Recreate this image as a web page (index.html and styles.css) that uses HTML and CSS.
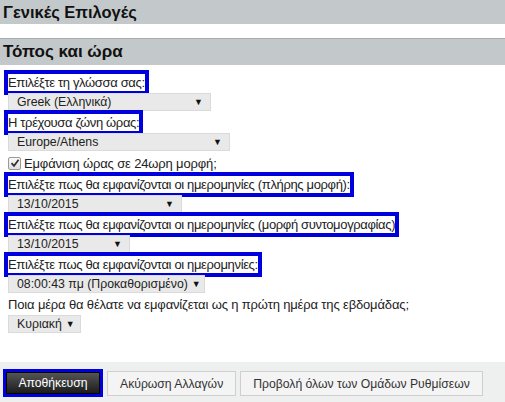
FILE: index.html
```html
<!DOCTYPE html>
<html lang="el">
<head>
<meta charset="utf-8">
<title>Γενικές Επιλογές</title>
<link rel="stylesheet" href="styles.css">
</head>
<body>
<div class="bar bar-main">Γενικές Επιλογές</div>
<div class="bar bar-sub">Τόπος και ώρα</div>
<div class="form">
  <div class="row"><span class="lbl hl">Επιλέξτε τη γλώσσα σας:</span></div>
  <div class="row"><div class="sel w1"><span>Greek (Ελληνικά)</span><span class="arr">▼</span></div></div>
  <div class="row"><span class="lbl hl">Η τρέχουσα ζώνη ώρας:</span></div>
  <div class="row"><div class="sel w2"><span>Europe/Athens</span><span class="arr">▼</span></div></div>
  <div class="row check-row">
    <span class="chk"><svg width="10" height="10" viewBox="0 0 10 10"><path d="M1.5 5.2 L4 7.8 L8.6 1.8" fill="none" stroke="#333" stroke-width="1.8"/></svg></span>
    <span class="txt">Εμφάνιση ώρας σε 24ωρη μορφή;</span>
  </div>
  <div class="row"><span class="lbl hl">Επιλέξτε πως θα εμφανίζονται οι ημερομηνίες (πλήρης μορφή):</span></div>
  <div class="row"><div class="sel w3"><span>13/10/2015</span><span class="arr">▼</span></div></div>
  <div class="row"><span class="lbl hl">Επιλέξτε πως θα εμφανίζονται οι ημερομηνίες (μορφή συντομογραφίας)</span></div>
  <div class="row"><div class="sel w4"><span>13/10/2015</span><span class="arr">▼</span></div></div>
  <div class="row"><span class="lbl hl">Επιλέξτε πως θα εμφανίζονται οι ημερομηνίες:</span></div>
  <div class="row"><div class="sel w5"><span>08:00:43 πμ (Προκαθορισμένο)</span><span class="arr">▼</span></div></div>
  <div class="row"><span class="txt">Ποια μέρα θα θέλατε να εμφανίζεται ως η πρώτη ημέρα της εβδομάδας;</span></div>
  <div class="row"><div class="sel w6"><span>Κυριακή</span><span class="arr">▼</span></div></div>
</div>
<div class="footer">
  <button class="btn btn-save">Αποθήκευση</button>
  <button class="btn">Ακύρωση Αλλαγών</button>
  <button class="btn">Προβολή όλων των Ομάδων Ρυθμίσεων</button>
</div>
</body>
</html>
```
FILE: styles.css
```css
html, body {
  margin: 0;
  padding: 0;
  background: #fff;
}
body {
  font-family: "Liberation Sans", Arial, sans-serif;
  color: #222;
  width: 505px;
  height: 402px;
  overflow: hidden;
  display: flex;
  flex-direction: column;
}
.bar {
  background: #c3c8cb;
  color: #111;
  font-weight: bold;
  font-size: 16.5px;
  padding-left: 3px;
  display: flex;
  align-items: center;
}
.bar-main {
  height: 24px;
}
.bar-sub {
  margin-top: 14px;
  height: 26px;
  border-top: 1px solid #a7acaf;
  font-size: 17px;
}
.form {
  padding: 8px 0 0 8px;
  display: flex;
  flex-direction: column;
  gap: 2px;
}
.row {
  display: flex;
  align-items: center;
  min-height: 18px;
}
.lbl {
  font-size: 13px;
  line-height: 17px;
  letter-spacing: -0.35px;
  color: #222;
  white-space: nowrap;
}
.txt {
  font-size: 13px;
  line-height: 17px;
  letter-spacing: -0.15px;
  color: #222;
  white-space: nowrap;
}
.hl {
  background: #fff;
  outline: 4px solid #0000dd;
}
.sel {
  height: 18px;
  box-sizing: border-box;
  background: #e9e9e9;
  border: 1px solid #dadada;
  display: flex;
  align-items: center;
  justify-content: space-between;
  padding: 0 7px 0 8px;
  font-size: 12.3px;
  color: #222;
  white-space: nowrap;
  flex-shrink: 0;
}
.arr {
  font-size: 9px;
  color: #111;
  margin-left: 4px;
}
.w1 { width: 203px; }
.w2 { width: 222px; }
.w3 { width: 174px; }
.w4 { width: 122px; }
.w5 { width: 197px; }
.w6 { width: 73px; }
.check-row {
  gap: 3px;
  min-height: 20px;
}
.chk {
  width: 11px;
  height: 11px;
  border: 1px solid #999;
  border-radius: 2px;
  background: linear-gradient(#fafafa, #dedede);
  display: flex;
  align-items: center;
  justify-content: center;
}
.footer {
  margin-top: auto;
  height: 40px;
  background: #eef0f0;
  display: flex;
  align-items: flex-start;
  padding: 9px 0 0 6px;
  box-sizing: border-box;
}
.btn {
  font-family: "Liberation Sans", Arial, sans-serif;
  font-size: 12.2px;
  color: #333;
  background: #f4f4f4;
  border: 1px solid #cfcfcf;
  height: 25px;
  padding: 0 12px;
  margin: 0;
  white-space: nowrap;
}
.btn + .btn {
  margin-left: 4px;
}
.btn-save {
  background: linear-gradient(#555, #1c1c1c);
  color: #fff;
  border: 1px solid #000;
  outline: 3px solid #0000dd;
  height: 22px;
  margin-top: 1px;
  margin-right: 2px;
  width: 94px;
  padding: 0;
}
.btn-save + .btn {
  margin-left: 5px;
}
```
